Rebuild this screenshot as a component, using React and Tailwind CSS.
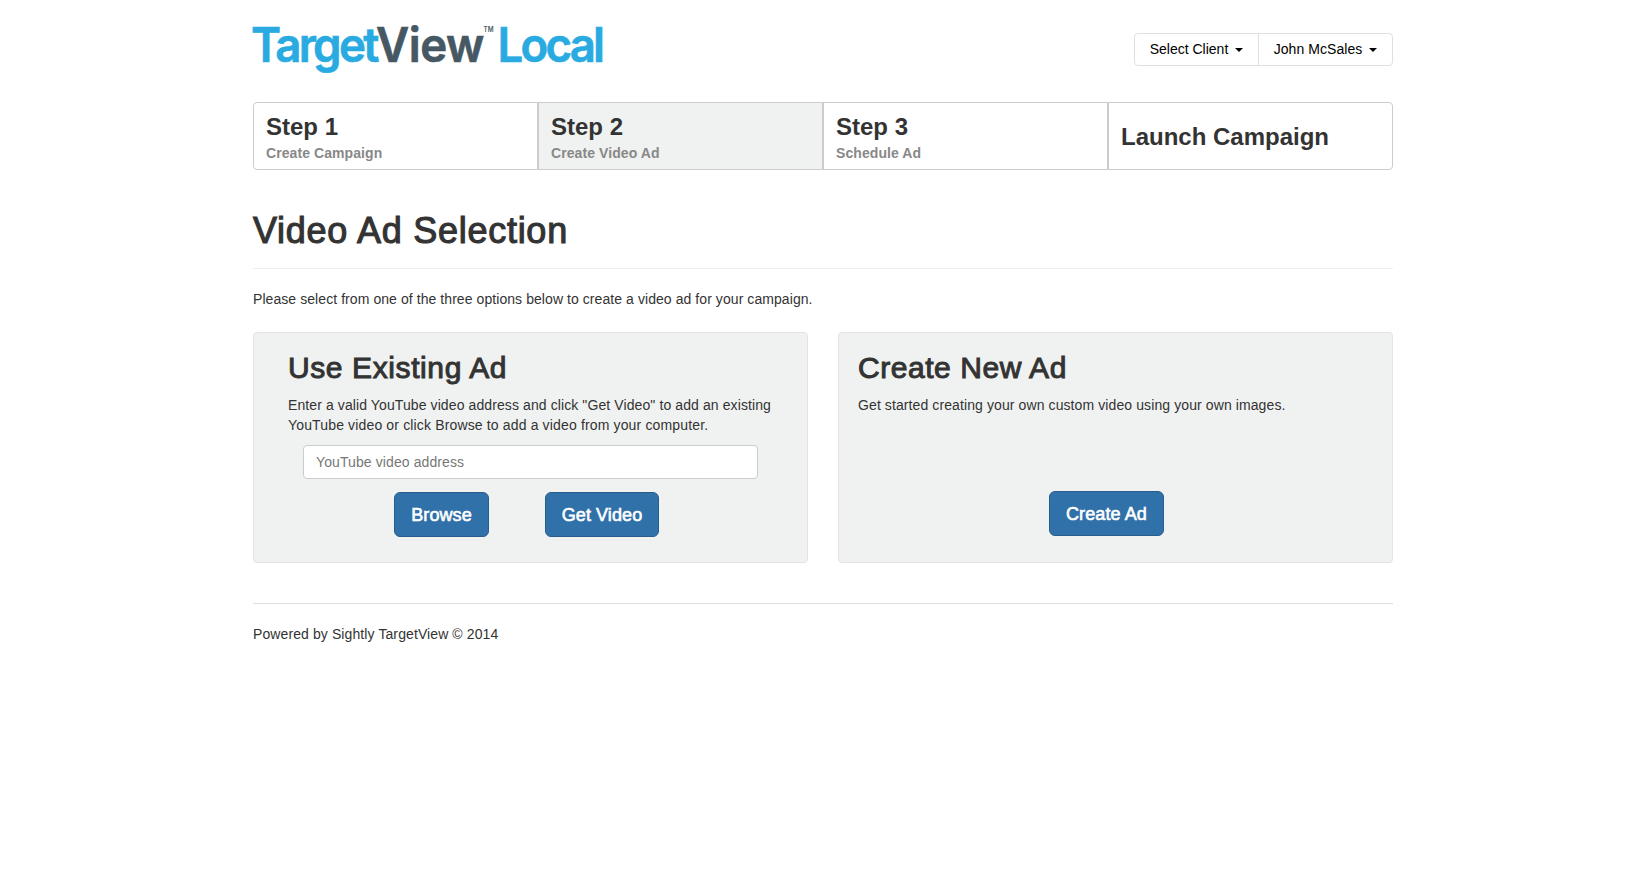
const steps = [
  { title: "Step 1", note: "Create Campaign" },
  { title: "Step 2", note: "Create Video Ad", active: true },
  { title: "Step 3", note: "Schedule Ad" },
  { title: "Launch Campaign" },
];

function Logo() {
  return (
    <svg width="360" height="60" viewBox="0 0 360 60" role="img" aria-label="TargetView Local" className="block overflow-visible font-['Inter',sans-serif] font-semibold">
      <g fontSize="48" strokeWidth="0.7" transform="translate(0 46.7) scale(0.95 1)">
        <text x="-2" y="0" textLength="135" fill="#29abe2" stroke="#29abe2">Target</text>
        <text x="129.5" y="0" textLength="114" fill="#465863" stroke="#465863">View</text>
        <text x="257.5" y="0" textLength="113" fill="#29abe2" stroke="#29abe2">Local</text>
      </g>
      <text x="230.5" y="16.5" fontSize="7.5" textLength="10" lengthAdjust="spacingAndGlyphs" fill="#465863">TM</text>
    </svg>
  );
}

function Caret() {
  return (
    <svg width="8" height="4" viewBox="0 0 8 4" className="ml-[7px] mt-0.5" fill="#000">
      <path d="M0 0h8L4 4z" />
    </svg>
  );
}

function PrimaryButton({ children, className }) {
  return (
    <button className={`h-[45px] rounded-md border border-[#285e8e] bg-[#3071a9] text-center text-lg leading-none tracking-[0.1px] text-white [-webkit-text-stroke:0.6px] ${className}`}>
      {children}
    </button>
  );
}

export default function App() {
  return (
    <div className="min-h-screen bg-white font-['Liberation_Sans',Arial,sans-serif] text-sm leading-5 text-[#333]">
      <div className="mx-auto w-[1140px]">
        <header className="flex h-[102px] items-start justify-between pt-[15px]">
          <Logo />
          <div className="mt-[18px] flex h-[33px] w-[259px] rounded border border-[#e0e0e0] text-black">
            <button className="flex w-[124px] items-center justify-center border-r border-[#e0e0e0] pb-0.5">
              Select Client
              <Caret />
            </button>
            <button className="flex flex-1 items-center justify-center pb-0.5 tracking-[0.05px]">
              John McSales
              <Caret />
            </button>
          </div>
        </header>

        <nav className="grid h-[68px] grid-cols-4 font-bold">
          {steps.map((s) => (
            <div key={s.title} className={`flex flex-col justify-center border border-[#ccc] pl-3 first:rounded-l last:rounded-r ${s.active ? "bg-[#f0f2f1]" : "bg-white"} ${s.note ? "pt-[5px]" : "pt-0.5"}`}>
              <div className="text-2xl leading-[26px]">{s.title}</div>
              {s.note && <div className="mt-[3px] leading-5 tracking-[0.08px] text-[#888]">{s.note}</div>}
            </div>
          ))}
        </nav>

        <h1 className="mt-[41px] border-b border-[#eee] pb-[17px] text-4xl leading-10 tracking-[0.74px] [-webkit-text-stroke:1.1px]">Video Ad Selection</h1>
        <p className="mt-5 tracking-[0.07px]">Please select from one of the three options below to create a video ad for your campaign.</p>

        <main className="mt-[23px] grid h-[231px] grid-cols-2 gap-[30px]">
          <section className="rounded border border-[#e3e3e3] bg-[#f0f2f1] pl-[34px] pt-[18px]">
            <h2 className="text-3xl leading-[33px] tracking-[0.6px] [-webkit-text-stroke:1px]">Use Existing Ad</h2>
            <p className="mt-[11px] tracking-[0.1px]">
              Enter a valid YouTube video address and click "Get Video" to add an existing
              <br />
              <span className="tracking-[0.15px]">YouTube video or click Browse to add a video from your computer.</span>
            </p>
            <input
              className="ml-[15px] mt-[10px] block h-[34px] w-[455px] rounded border border-[#ccc] bg-white px-3 tracking-[0.1px] placeholder:text-[#777]"
              placeholder="YouTube video address"
            />
            <div className="ml-[106px] mt-[13px] flex gap-14">
              <PrimaryButton className="w-[95px]">Browse</PrimaryButton>
              <PrimaryButton className="w-[114px]">Get Video</PrimaryButton>
            </div>
          </section>
          <section className="rounded border border-[#e3e3e3] bg-[#f0f2f1] pl-[19px] pt-[18px]">
            <h2 className="text-3xl leading-[33px] tracking-[0.55px] [-webkit-text-stroke:1px]">Create New Ad</h2>
            <p className="mt-[11px] tracking-[0.1px]">Get started creating your own custom video using your own images.</p>
            <PrimaryButton className="ml-[191px] mt-[76px] w-[115px]">Create Ad</PrimaryButton>
          </section>
        </main>

        <footer className="mt-10 border-t border-[#ddd] pt-5 tracking-[0.1px]">Powered by Sightly TargetView © 2014</footer>
      </div>
    </div>
  );
}
